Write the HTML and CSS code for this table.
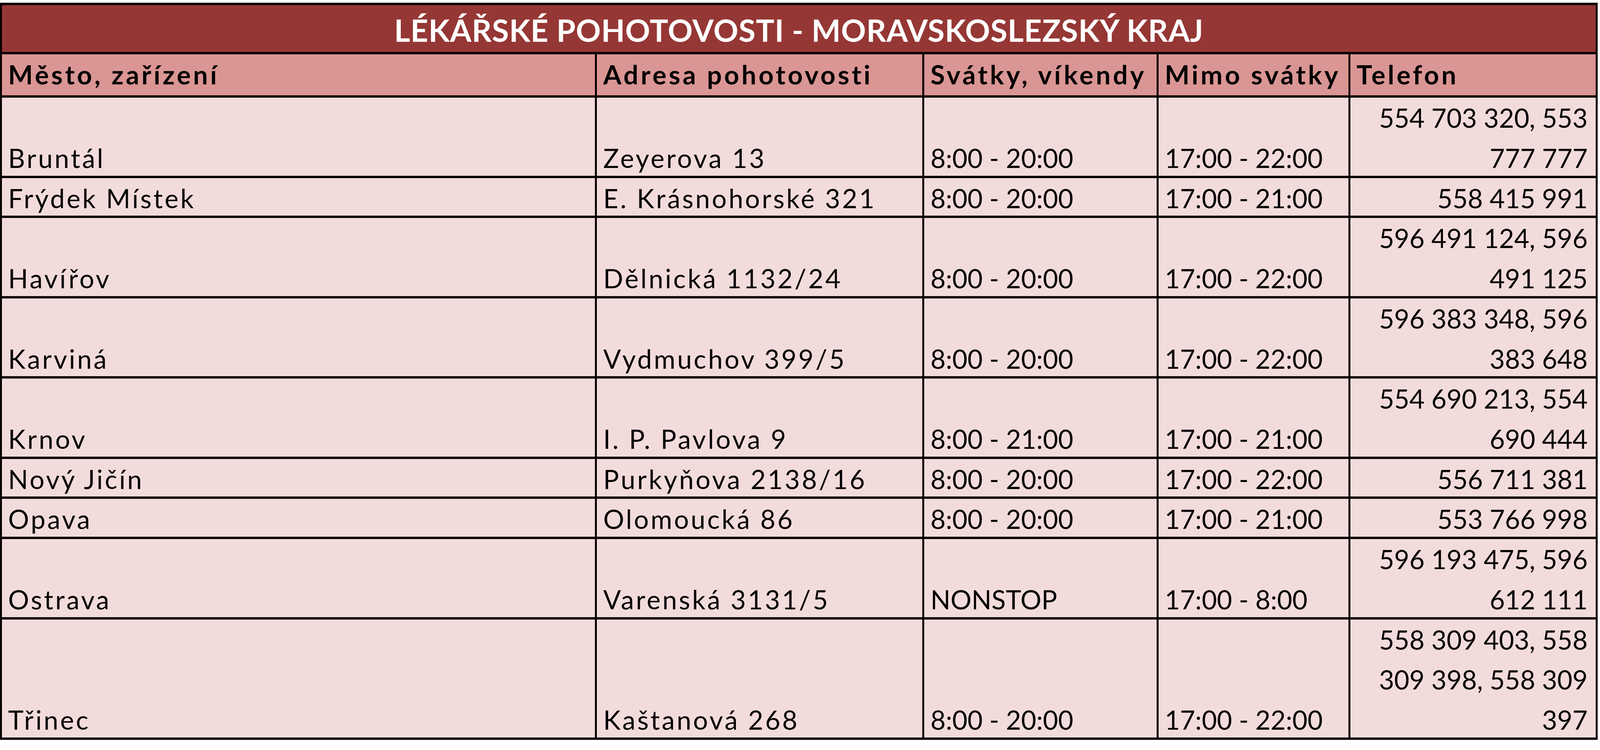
FILE: index.html
```html
<!DOCTYPE html>
<html lang="cs">
<head>
<meta charset="utf-8">
<title>Lékařské pohotovosti - Moravskoslezský kraj</title>
<link rel="stylesheet" href="styles.css">
</head>
<body>
<div class="sheet">
  <div class="title"><span class="txt">LÉKÁŘSKÉ POHOTOVOSTI - MORAVSKOSLEZSKÝ KRAJ</span></div>

  <div class="row head">
    <div class="cell"><span class="txt">Město, zařízení</span></div>
    <div class="cell"><span class="txt">Adresa pohotovosti</span></div>
    <div class="cell"><span class="txt">Svátky, víkendy</span></div>
    <div class="cell"><span class="txt">Mimo svátky</span></div>
    <div class="cell"><span class="txt">Telefon</span></div>
  </div>

  <div class="row l2">
    <div class="cell word"><span class="txt">Bruntál</span></div>
    <div class="cell word"><span class="txt">Zeyerova 13</span></div>
    <div class="cell"><span class="txt">8:00 - 20:00</span></div>
    <div class="cell"><span class="txt">17:00 - 22:00</span></div>
    <div class="cell phone"><span class="txt">554 703 320, 553<br>777 777</span></div>
  </div>

  <div class="row l1">
    <div class="cell word"><span class="txt">Frýdek Místek</span></div>
    <div class="cell word"><span class="txt">E. Krásnohorské 321</span></div>
    <div class="cell"><span class="txt">8:00 - 20:00</span></div>
    <div class="cell"><span class="txt">17:00 - 21:00</span></div>
    <div class="cell phone"><span class="txt">558 415 991</span></div>
  </div>

  <div class="row l2">
    <div class="cell word"><span class="txt">Havířov</span></div>
    <div class="cell word"><span class="txt">Dělnická 1132/24</span></div>
    <div class="cell"><span class="txt">8:00 - 20:00</span></div>
    <div class="cell"><span class="txt">17:00 - 22:00</span></div>
    <div class="cell phone"><span class="txt">596 491 124, 596<br>491 125</span></div>
  </div>

  <div class="row l2">
    <div class="cell word"><span class="txt">Karviná</span></div>
    <div class="cell word"><span class="txt">Vydmuchov 399/5</span></div>
    <div class="cell"><span class="txt">8:00 - 20:00</span></div>
    <div class="cell"><span class="txt">17:00 - 22:00</span></div>
    <div class="cell phone"><span class="txt">596 383 348, 596<br>383 648</span></div>
  </div>

  <div class="row l2">
    <div class="cell word"><span class="txt">Krnov</span></div>
    <div class="cell word"><span class="txt">I. P. Pavlova 9</span></div>
    <div class="cell"><span class="txt">8:00 - 21:00</span></div>
    <div class="cell"><span class="txt">17:00 - 21:00</span></div>
    <div class="cell phone"><span class="txt">554 690 213, 554<br>690 444</span></div>
  </div>

  <div class="row l1">
    <div class="cell word"><span class="txt">Nový Jičín</span></div>
    <div class="cell word"><span class="txt">Purkyňova 2138/16</span></div>
    <div class="cell"><span class="txt">8:00 - 20:00</span></div>
    <div class="cell"><span class="txt">17:00 - 22:00</span></div>
    <div class="cell phone"><span class="txt">556 711 381</span></div>
  </div>

  <div class="row l1">
    <div class="cell word"><span class="txt">Opava</span></div>
    <div class="cell word"><span class="txt">Olomoucká 86</span></div>
    <div class="cell"><span class="txt">8:00 - 20:00</span></div>
    <div class="cell"><span class="txt">17:00 - 21:00</span></div>
    <div class="cell phone"><span class="txt">553 766 998</span></div>
  </div>

  <div class="row l2">
    <div class="cell word"><span class="txt">Ostrava</span></div>
    <div class="cell word"><span class="txt">Varenská 3131/5</span></div>
    <div class="cell"><span class="txt">NONSTOP</span></div>
    <div class="cell"><span class="txt">17:00 - 8:00</span></div>
    <div class="cell phone"><span class="txt">596 193 475, 596<br>612 111</span></div>
  </div>

  <div class="row l3">
    <div class="cell word"><span class="txt">Třinec</span></div>
    <div class="cell word"><span class="txt">Kaštanová 268</span></div>
    <div class="cell"><span class="txt">8:00 - 20:00</span></div>
    <div class="cell"><span class="txt">17:00 - 22:00</span></div>
    <div class="cell phone"><span class="txt">558 309 403, 558<br>309 398, 558 309<br>397</span></div>
  </div>
</div>
</body>
</html>
```

FILE: styles.css
```css
:root {
  --u: calc(100vw / 4146);
}

html, body {
  margin: 0;
  padding: 0;
  background: #ffffff;
  overflow: hidden;
}

.sheet {
  box-sizing: border-box;
  width: calc(4140 * var(--u));
  margin-top: calc(7 * var(--u));
  border: calc(6 * var(--u)) solid #0a0000;
  border-top-width: calc(7 * var(--u));
  border-bottom-width: calc(7 * var(--u));
  font-family: Lato, "Noto Sans", "Liberation Sans", sans-serif;
  font-size: calc(68 * var(--u));
  color: #050202;
  background: #f2dcdb;
}

.txt {
  display: block;
  line-height: calc(104 * var(--u));
  white-space: nowrap;
  margin-bottom: calc(-4 * var(--u));
}

.title {
  box-sizing: border-box;
  height: calc(122 * var(--u));
  background: #953735;
  color: #ffffff;
  font-weight: 700;
  font-size: calc(80 * var(--u));
  letter-spacing: calc(0.8 * var(--u));
  display: flex;
  flex-direction: column;
  justify-content: flex-end;
  align-items: center;
}

.title .txt {
  margin-bottom: calc(5 * var(--u));
}

.row {
  box-sizing: border-box;
  display: grid;
  grid-template-columns:
    calc(1537 * var(--u))
    calc(848 * var(--u))
    calc(607 * var(--u))
    calc(497 * var(--u))
    calc(639 * var(--u));
  border-top: calc(7 * var(--u)) solid #0a0000;
}

.row.head {
  height: calc(112 * var(--u));
  background: #da9694;
  font-weight: 700;
  letter-spacing: calc(6 * var(--u));
}

.row.head .txt {
  margin-bottom: calc(2 * var(--u));
}

.row.l1 { height: calc(104 * var(--u)); }
.row.l2 { height: calc(208 * var(--u)); }
.row.l3 { height: calc(312 * var(--u)); }

.cell {
  box-sizing: border-box;
  border-left: calc(6 * var(--u)) solid #0a0000;
  padding: 0 calc(19 * var(--u)) 0 calc(16 * var(--u));
  display: flex;
  flex-direction: column;
  justify-content: flex-end;
  align-items: flex-start;
  min-width: 0;
}

.cell:first-child {
  border-left: 0;
}

.cell.word {
  letter-spacing: calc(4.8 * var(--u));
}

.cell.phone {
  align-items: flex-end;
  text-align: right;
}
```
